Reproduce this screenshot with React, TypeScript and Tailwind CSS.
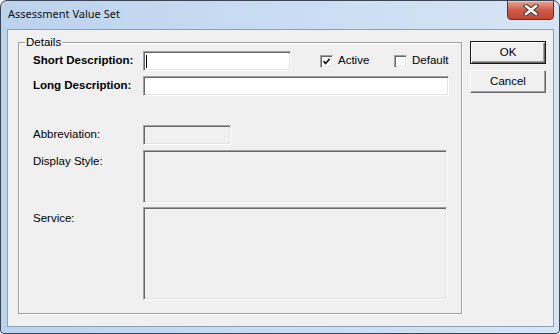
import React from "react";

function Sunken({ className = "", children }: { className?: string; children?: React.ReactNode }) {
  return (
    <div
      className={`border border-t-[#a0a0a0] border-l-[#a0a0a0] border-r-white border-b-white shadow-[inset_1px_1px_0_#696969,inset_-1px_-1px_0_#e3e3e3] ${className}`}
    >
      {children}
    </div>
  );
}

function Checkbox({ checked, label, className = "" }: { checked?: boolean; label: string; className?: string }) {
  return (
    <label className={`flex items-center gap-[5px] ${className}`}>
      <Sunken className="w-[13px] h-[13px] bg-white flex items-center justify-center">
        {checked && (
          <svg width="9" height="9" viewBox="0 0 9 9">
            <path d="M1.5 4.2 L3.6 6.5 L7.6 1.8" fill="none" stroke="#1a1a1a" strokeWidth="1.8" />
          </svg>
        )}
      </Sunken>
      <span>{label}</span>
    </label>
  );
}

function Button({ label, isDefault }: { label: string; isDefault?: boolean }) {
  return (
    <button
      className={`w-[76px] h-[23px] bg-[#f0f0f0] flex items-center justify-center ${
        isDefault
          ? "border border-[#1a1a1a] shadow-[inset_1px_1px_0_#fff,inset_-1px_-1px_0_#696969,inset_-2px_-2px_0_#a0a0a0]"
          : "border border-t-white border-l-white border-r-[#696969] border-b-[#696969] shadow-[inset_-1px_-1px_0_#a0a0a0]"
      }`}
    >
      {label}
    </button>
  );
}

export default function App() {
  return (
    <div className="w-[560px] h-[334px] bg-[#f0f0f0]">
      <div className="w-[560px] h-[334px] border border-[#3a4656] rounded-t-[7px] rounded-b-[4px] bg-gradient-to-r from-[#bcd3ee] to-[#d6e5f5] flex flex-col overflow-hidden font-['Liberation_Sans',Arial,sans-serif] text-[11.5px] text-black">
        {/* Title bar */}
        <div className="h-[28px] flex items-start justify-between">
          <div className="pl-[7px] pt-[5px] font-['Noto_Sans',sans-serif] text-[11px] leading-[15px] text-[#111]">
            Assessment Value Set
          </div>
          <div className="mr-[5px] w-[47px] h-[20px] -mt-px rounded-b-[4px] border border-[#6d2a22] bg-gradient-to-b from-[#e6a697] via-[#cf5b48] to-[#c24630] shadow-[inset_0_1px_0_rgba(255,255,255,0.4)] flex items-center justify-center">
            <svg width="16" height="12" viewBox="0 0 16 12">
              <path d="M3 2 L13 10 M13 2 L3 10" stroke="#3b3b3b" strokeWidth="4.4" strokeLinecap="square" />
              <path d="M3 2 L13 10 M13 2 L3 10" stroke="#ffffff" strokeWidth="2.4" strokeLinecap="square" />
            </svg>
          </div>
        </div>

        {/* Client area */}
        <div className="ml-[6px] mr-[5px] mb-[6px] flex-1 border border-[#8aa0b9] bg-[#f0f0f0] flex pl-[10px] pt-[6px]">
          <fieldset className="w-[444px] h-[278px] border border-[#a0a0a0] shadow-[inset_1px_1px_0_#fff,1px_1px_0_#fff] p-0 m-0 min-w-0">
            <legend className="ml-[6px] px-[1px] leading-[12px]">Details</legend>
            <div className="pl-[14px] pt-[3px] flex flex-col">
              {/* Short description */}
              <div className="flex items-center h-[20px]">
                <div className="w-[110px] font-bold">Short Description:</div>
                <Sunken className="w-[148px] h-[20px] bg-white relative">
                  <span className="absolute left-[2px] top-[3px] w-px h-[13px] bg-black" />
                </Sunken>
                <Checkbox checked label="Active" className="ml-[29px] w-[74px]" />
                <Checkbox label="Default" />
              </div>

              {/* Long description */}
              <div className="flex items-center h-[20px] mt-[5px]">
                <div className="w-[110px] font-bold">Long Description:</div>
                <Sunken className="w-[306px] h-[20px] bg-white" />
              </div>

              {/* Abbreviation */}
              <div className="flex items-center h-[20px] mt-[29px]">
                <div className="w-[110px]">Abbreviation:</div>
                <Sunken className="w-[88px] h-[20px] bg-[#f0f0f0]" />
              </div>

              {/* Display style */}
              <div className="flex items-start mt-[5px]">
                <div className="w-[110px] pt-[3px]">Display Style:</div>
                <Sunken className="w-[304px] h-[53px] bg-[#f0f0f0]" />
              </div>

              {/* Service */}
              <div className="flex items-start mt-[4px]">
                <div className="w-[110px] pt-[3px]">Service:</div>
                <Sunken className="w-[304px] h-[93px] bg-[#f0f0f0]" />
              </div>
            </div>
          </fieldset>

          <div className="ml-[8px] pt-[5px] flex flex-col gap-[6px]">
            <Button label="OK" isDefault />
            <Button label="Cancel" />
          </div>
        </div>
      </div>
    </div>
  );
}
